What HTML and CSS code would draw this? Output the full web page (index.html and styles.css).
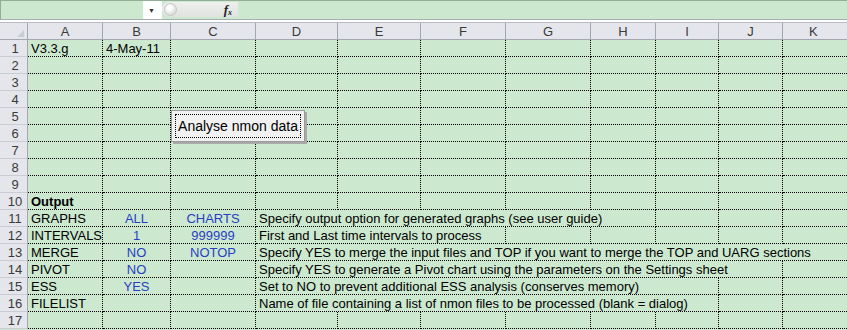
FILE: index.html
```html
<!DOCTYPE html>
<html lang="en">
<head>
  <meta charset="UTF-8" />
  <meta name="viewport" content="width=device-width, initial-scale=1.0"/>
  <title>nmon analyser</title>
  <link rel="stylesheet" href="styles.css">
</head>
<body>
  <div class="formula-bar">
    <div class="name-box"></div>
    <div class="name-drop"><span class="arrow">&#9660;</span></div>
    <div class="fx-box">
      <span class="knob"></span>
      <span class="fx">f<sub>x</sub></span>
    </div>
    <div class="formula-input"></div>
  </div>
  <div class="bar-gap"></div>

  <div class="sheet-wrap">
    <div class="sheet" id="sheet">
      <!-- cells built by the script below -->
    </div>
    <button class="macro-btn"><span>Analyse nmon data</span></button>
  </div>

  <script>
    const colunas = ['A', 'B', 'C', 'D', 'E', 'F', 'G', 'H', 'I', 'J', 'K'];

    // a = col A, b/c = blue values, d = text in D and how many columns it covers
    const linhas = [
      { a: 'V3.3.g', b: '4-May-11', plainB: true },
      {}, {}, {}, {}, {}, {}, {}, {},
      { a: 'Output', bold: true },
      { a: 'GRAPHS', b: 'ALL', c: 'CHARTS', d: 'Specify output option for generated graphs (see user guide)', span: 5 },
      { a: 'INTERVALS', b: '1', c: '999999', d: 'First and Last time intervals to process', span: 3 },
      { a: 'MERGE', b: 'NO', c: 'NOTOP', d: 'Specify YES to merge the input files and TOP if you want to merge the TOP and UARG sections', span: 8 },
      { a: 'PIVOT', b: 'NO', d: 'Specify YES to generate a Pivot chart using the parameters on the Settings sheet', span: 7 },
      { a: 'ESS', b: 'YES', d: 'Set to NO to prevent additional ESS analysis (conserves memory)', span: 6 },
      { a: 'FILELIST', d: 'Name of file containing a list of nmon files to be processed (blank = dialog)', span: 6 },
      {}
    ];

    const sheet = document.getElementById('sheet');

    function celula(classe, texto) {
      const div = document.createElement('div');
      div.className = classe;
      if (texto) div.textContent = texto;
      sheet.appendChild(div);
      return div;
    }

    // header row
    celula('corner').appendChild(document.createElement('span')).className = 'tri';
    colunas.forEach(c => celula('col-head', c));

    linhas.forEach((l, i) => {
      celula('row-head', String(i + 1));
      const a = celula('cell', l.a);
      if (l.bold) a.classList.add('bold');
      celula(l.plainB ? 'cell' : 'cell blue', l.b);
      celula('cell blue', l.c);
      let resto = 8;
      if (l.d) {
        const d = celula('cell text', l.d);
        d.style.gridColumn = 'span ' + l.span;
        resto -= l.span;
      }
      for (let k = 0; k < resto; k++) celula('cell');
    });
  </script>
</body>
</html>
```

FILE: styles.css
```css
body {
  margin: 0;
  width: 847px;
  height: 330px;
  overflow: hidden;
  background: #cce8cf;
  font-family: 'Liberation Sans', Arial, sans-serif;
  font-size: 13px;
  color: #000;
}

/* formula bar */
.formula-bar {
  display: flex;
  height: 18px;
  border-top: 1px solid #93ad97;
  border-left: 1px solid #93ad97;
  background: #cce8cf;
}

.name-box {
  width: 142px;
}

.name-drop {
  width: 19px;
  height: 18px;
  background: #fff;
  display: flex;
  align-items: center;
  justify-content: center;
}

.name-drop .arrow {
  font-size: 7px;
  color: #333;
  margin-left: -2px;
}

.fx-box {
  width: 76px;
  height: 15px;
  margin-top: 1px;
  background: linear-gradient(#eef0ee, #dfe2df);
  border-radius: 8px 0 0 8px;
  position: relative;
  display: flex;
  align-items: center;
  justify-content: flex-end;
  padding-right: 6px;
  box-sizing: border-box;
}

.fx-box .knob {
  position: absolute;
  left: 2px;
  top: 1px;
  width: 13px;
  height: 13px;
  border-radius: 50%;
  border: 1px solid #c4c7c4;
  box-sizing: border-box;
  background: radial-gradient(circle at 40% 35%, #fdfdfd 20%, #d6d9d6 80%);
}

.fx {
  font-family: 'Liberation Serif', serif;
  font-style: italic;
  font-weight: bold;
  font-size: 13px;
  color: #222;
  line-height: 1;
}

.fx sub {
  font-size: 8px;
  vertical-align: -1px;
}

.formula-input {
  flex: 1;
}

.bar-gap {
  height: 2px;
  background: #fff;
  border-top: 1px solid #a7adb4;
  border-bottom: 1px solid #b8bdc4;
}

/* the grid */
.sheet-wrap {
  position: relative;
}

.sheet {
  display: grid;
  grid-template-columns: 28px 75px 68px 85px 82px 83px 85px 85px 65px 63px 64px 80px;
  grid-auto-rows: 17px;
  width: 863px;
}

.corner,
.col-head,
.row-head {
  background: #e4e6eb;
  color: #3a3a3a;
  box-sizing: border-box;
  display: flex;
  align-items: center;
  justify-content: center;
}

.corner {
  border-right: 1px solid #a3a8b0;
  border-bottom: 1px solid #a3a8b0;
  position: relative;
}

.corner .tri {
  position: absolute;
  right: 3px;
  bottom: 2px;
  width: 0;
  height: 0;
  border-left: 7px solid transparent;
  border-bottom: 7px solid #c9ccd2;
}

.col-head {
  border-right: 1px solid #a3a8b0;
  border-bottom: 1px solid #a3a8b0;
}

.sheet .col-head:nth-child(12) {
  justify-content: flex-start;
  padding-left: 26px;
}

.row-head {
  border-right: 1px solid #a3a8b0;
  border-bottom: 1px solid #c9ccd2;
  padding-left: 3px;
  padding-top: 1px;
}

.cell {
  box-sizing: border-box;
  border-right: 1px dotted #000;
  border-bottom: 1px dotted #000;
  padding-left: 3px;
  white-space: nowrap;
  overflow: hidden;
  line-height: 17px;
}

.cell.blue {
  color: #2a3ec4;
  text-align: center;
  padding-left: 0;
}

.cell.bold {
  font-weight: bold;
}

/* button drawn over rows 5-6 */
.macro-btn {
  position: absolute;
  left: 171px;
  top: 87px;
  width: 134px;
  height: 32px;
  padding: 3px;
  background: #f1f1f1;
  border: 1px solid #9b9b9b;
  box-shadow: 2px 2px 0 #a8aaa8;
  font-family: 'Liberation Sans', Arial, sans-serif;
  font-size: 14px;
  color: #000;
  box-sizing: border-box;
}

.macro-btn span {
  display: flex;
  align-items: center;
  justify-content: center;
  height: 100%;
  border: 1px dotted #000;
  box-sizing: border-box;
}
```
